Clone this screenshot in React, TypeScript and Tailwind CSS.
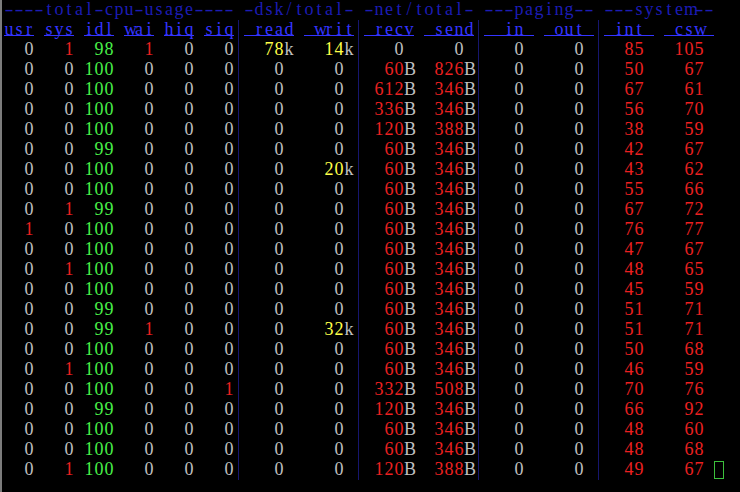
import React from "react";

type Cell = { ch: string; c: string };

const GRAY = "text-[#c0c0c0]";
const RED = "text-[#ec2020]";
const GREEN = "text-[#48f048]";
const YELLOW = "text-[#ffff48]";
const TITLE = "text-[#1c1cb4]";
const SUB = "text-[#3434ff]";

const padL = (s: string, w: number) => " ".repeat(Math.max(0, w - s.length)) + s;

const text = (s: string, c: string): Cell[] => s.split("").map((ch) => ({ ch, c }));

// cpu column: 3 chars, right aligned
const cpu = (n: number, idle = false): Cell[] => {
  const c = idle ? GREEN : n === 0 ? GRAY : RED;
  return text(padL(String(n), 3), c);
};

// value with a unit suffix (k / B), 5 chars wide; a bare zero keeps a trailing space
const unit = (v: string, color: string): Cell[] => {
  if (v === "0") return text("   0 ", GRAY);
  const num = v.slice(0, -1);
  const u = v.slice(-1);
  return [...text(" ".repeat(5 - v.length), GRAY), ...text(num, color), ...text(u, GRAY)];
};

const sys = (v: string): Cell[] => text(padL(v, 4) + " ", RED);

const SP: Cell = { ch: " ", c: GRAY };
const SEP: Cell = { ch: "|", c: "" };

type Row = {
  c: number[]; // usr sys idl wai hiq siq
  dsk: [string, string];
  net: [string, string];
  sy: [string, string];
};

const rows: Row[] = [
  { c: [0, 1, 98, 1, 0, 0], dsk: ["78k", "14k"], net: ["0", "0"], sy: ["85", "105"] },
  { c: [0, 0, 100, 0, 0, 0], dsk: ["0", "0"], net: ["60B", "826B"], sy: ["50", "67"] },
  { c: [0, 0, 100, 0, 0, 0], dsk: ["0", "0"], net: ["612B", "346B"], sy: ["67", "61"] },
  { c: [0, 0, 100, 0, 0, 0], dsk: ["0", "0"], net: ["336B", "346B"], sy: ["56", "70"] },
  { c: [0, 0, 100, 0, 0, 0], dsk: ["0", "0"], net: ["120B", "388B"], sy: ["38", "59"] },
  { c: [0, 0, 99, 0, 0, 0], dsk: ["0", "0"], net: ["60B", "346B"], sy: ["42", "67"] },
  { c: [0, 0, 100, 0, 0, 0], dsk: ["0", "20k"], net: ["60B", "346B"], sy: ["43", "62"] },
  { c: [0, 0, 100, 0, 0, 0], dsk: ["0", "0"], net: ["60B", "346B"], sy: ["55", "66"] },
  { c: [0, 1, 99, 0, 0, 0], dsk: ["0", "0"], net: ["60B", "346B"], sy: ["67", "72"] },
  { c: [1, 0, 100, 0, 0, 0], dsk: ["0", "0"], net: ["60B", "346B"], sy: ["76", "77"] },
  { c: [0, 0, 100, 0, 0, 0], dsk: ["0", "0"], net: ["60B", "346B"], sy: ["47", "67"] },
  { c: [0, 1, 100, 0, 0, 0], dsk: ["0", "0"], net: ["60B", "346B"], sy: ["48", "65"] },
  { c: [0, 0, 100, 0, 0, 0], dsk: ["0", "0"], net: ["60B", "346B"], sy: ["45", "59"] },
  { c: [0, 0, 99, 0, 0, 0], dsk: ["0", "0"], net: ["60B", "346B"], sy: ["51", "71"] },
  { c: [0, 0, 99, 1, 0, 0], dsk: ["0", "32k"], net: ["60B", "346B"], sy: ["51", "71"] },
  { c: [0, 0, 100, 0, 0, 0], dsk: ["0", "0"], net: ["60B", "346B"], sy: ["50", "68"] },
  { c: [0, 1, 100, 0, 0, 0], dsk: ["0", "0"], net: ["60B", "346B"], sy: ["46", "59"] },
  { c: [0, 0, 100, 0, 0, 1], dsk: ["0", "0"], net: ["332B", "508B"], sy: ["70", "76"] },
  { c: [0, 0, 99, 0, 0, 0], dsk: ["0", "0"], net: ["120B", "346B"], sy: ["66", "92"] },
  { c: [0, 0, 100, 0, 0, 0], dsk: ["0", "0"], net: ["60B", "346B"], sy: ["48", "60"] },
  { c: [0, 0, 100, 0, 0, 0], dsk: ["0", "0"], net: ["60B", "346B"], sy: ["48", "68"] },
  { c: [0, 1, 100, 0, 0, 0], dsk: ["0", "0"], net: ["120B", "388B"], sy: ["49", "67"] },
];

const buildRow = (r: Row): Cell[] => {
  const out: Cell[] = [];
  r.c.forEach((n, i) => {
    if (i > 0) out.push(SP);
    out.push(...cpu(n, i === 2));
  });
  out.push(SEP, ...unit(r.dsk[0], YELLOW), SP, ...unit(r.dsk[1], YELLOW));
  out.push(SEP, ...unit(r.net[0], RED), SP, ...unit(r.net[1], RED));
  out.push(SEP, ...text("   0 ", GRAY), SP, ...text("   0 ", GRAY));
  out.push(SEP, ...sys(r.sy[0]), SP, ...sys(r.sy[1]));
  return out;
};

function Ch({ cell }: { cell: Cell }) {
  if (cell.ch === "|") {
    return (
      <div className="flex w-[10px] self-stretch">
        <div className="ml-[4px] w-px bg-[#16166e]" />
      </div>
    );
  }
  return (
    <span className={`inline-block w-[10px] text-center ${cell.c}`}>
      {cell.ch === "-" ? <span className="inline-block scale-x-150">-</span> : cell.ch === " " ? "\u00a0" : cell.ch}
    </span>
  );
}

function Line({ cells, children }: { cells: Cell[]; children?: React.ReactNode }) {
  return (
    <div className="flex h-[20px] leading-[18px]">
      {cells.map((cell, i) => (
        <Ch key={i} cell={cell} />
      ))}
      {children}
    </div>
  );
}

const title = "----total-cpu-usage---- -dsk/total- -net/total- ---paging-- ---system--";

// second header line: underlined labels, plain gaps and column separators
const labels = [
  "usr", " ", "sys", " ", "idl", " ", "wai", " ", "hiq", " ", "siq", "|",
  " read", " ", " writ", "|",
  " recv", " ", " send", "|",
  "  in ", " ", " out ", "|",
  " int ", " ", " csw ",
];

export default function App() {
  return (
    <div
      className="w-[740px] h-[492px] overflow-hidden bg-black border-l-2 border-[#7c7c7c] pl-[2px] text-[18px]"
      style={{ fontFamily: '"Liberation Serif", "Times New Roman", serif' }}
    >
      <Line cells={text(title, TITLE)} />
      <div className="flex h-[20px] leading-[18px]">
        {labels.map((l, i) =>
          l === "|" ? (
            <Ch key={i} cell={SEP} />
          ) : l === " " ? (
            <Ch key={i} cell={SP} />
          ) : (
            <div key={i} className="flex h-[16px] border-b border-[#3434ff]">
              {text(l, SUB).map((c, j) => (
                <Ch key={j} cell={c} />
              ))}
            </div>
          )
        )}
      </div>
      {rows.map((r, i) => (
        <Line key={i} cells={buildRow(r)}>
          {i === rows.length - 1 ? (
            <div className="mt-[1px] h-[18px] w-[10px] border border-[#3cc03c]" />
          ) : null}
        </Line>
      ))}
    </div>
  );
}
